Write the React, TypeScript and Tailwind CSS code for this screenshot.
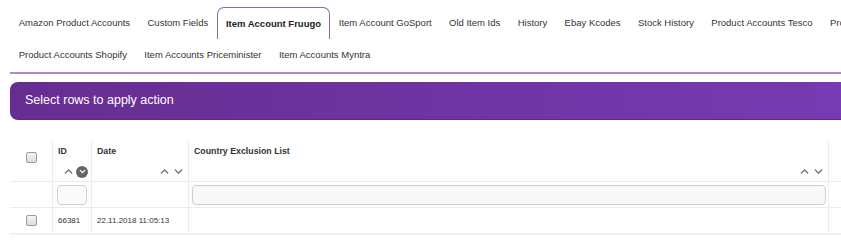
import { ChevronUp, ChevronDown } from "lucide-react"

const row1 = [
  "Amazon Product Accounts",
  "Custom Fields",
  "Item Account Fruugo",
  "Item Account GoSport",
  "Old Item Ids",
  "History",
  "Ebay Kcodes",
  "Stock History",
  "Product Accounts Tesco",
  "Product Accounts Cdiscount",
]
const row2 = ["Product Accounts Shopify", "Item Accounts Priceminister", "Item Accounts Myntra"]

function Tab({ label, active }: { label: string; active?: boolean }) {
  if (active) {
    return (
      <div className="h-[33px] px-[8px] flex items-center shrink-0 border border-b-0 border-[#8e63b8] rounded-t-[7px] bg-white font-bold text-[#222] -mb-px">
        {label}
      </div>
    )
  }
  return <div className="h-[32px] px-[8.7px] flex items-center shrink-0 text-[#333]">{label}</div>
}

function Checkbox() {
  return (
    <div className="w-[11px] h-[11px] rounded-[2px] border border-[#9a9a9a] bg-gradient-to-b from-[#f4f4f4] to-[#dcdcdc]" />
  )
}

function Sort({ activeDown }: { activeDown?: boolean }) {
  return (
    <div className="flex items-center gap-[1px] text-[#666]">
      <ChevronUp size={13} strokeWidth={2.5} />
      {activeDown ? (
        <div className="w-[12px] h-[12px] rounded-full bg-[#666] flex items-center justify-center text-white">
          <ChevronDown size={9} strokeWidth={3.5} />
        </div>
      ) : (
        <ChevronDown size={13} strokeWidth={2.5} />
      )}
    </div>
  )
}

export default function App() {
  return (
    <div className="w-[841px] h-[250px] overflow-hidden bg-white font-['Liberation_Sans',Arial,sans-serif]">
      {/* Tabs */}
      <div className="ml-[10px] pt-[7px] text-[9.5px] border-b-2 border-[#a98ad0]">
        <div className="flex items-end whitespace-nowrap overflow-hidden">
          {row1.map((t) => (
            <Tab key={t} label={t} active={t === "Item Account Fruugo"} />
          ))}
        </div>
        <div className="flex items-center whitespace-nowrap h-[33px]">
          {row2.map((t) => (
            <Tab key={t} label={t} />
          ))}
        </div>
      </div>

      {/* Action banner */}
      <div className="ml-[10px] mt-[8px] h-[38px] rounded-l-[8px] bg-gradient-to-r from-[#662d91] to-[#763bb2] border-b border-[#5b2a8c] flex items-center pl-[15px] text-white text-[12.5px]">
        Select rows to apply action
      </div>

      {/* Grid */}
      <div className="ml-[10px] mt-[22px] text-[8px] text-[#333]">
        <div className="flex h-[40px] border-b border-[#e6edf7] text-[8.8px]">
          <div className="w-[42px] flex justify-center pt-[10px]">
            <Checkbox />
          </div>
          <div className="w-[39px] border-l border-[#e6edf7] flex flex-col justify-between pl-[5px] pr-[3px] pt-[3px] pb-[3px]">
            <span className="font-bold">ID</span>
            <div className="flex justify-end">
              <Sort activeDown />
            </div>
          </div>
          <div className="w-[97px] border-l border-[#e6edf7] flex flex-col justify-between pl-[5px] pr-[3px] pt-[3px] pb-[3px]">
            <span className="font-bold">Date</span>
            <div className="flex justify-end">
              <Sort />
            </div>
          </div>
          <div className="w-[640px] border-l border-[#e6edf7] flex flex-col justify-between pl-[5px] pr-[3px] pt-[3px] pb-[3px]">
            <span className="font-bold">Country Exclusion List</span>
            <div className="flex justify-end">
              <Sort />
            </div>
          </div>
          <div className="flex-1 border-l border-[#e6edf7]" />
        </div>
        <div className="flex h-[26px] border-b border-[#e6edf7]">
          <div className="w-[42px]" />
          <div className="w-[39px] border-l border-[#e6edf7] flex items-center px-[4px]">
            <div className="w-full h-[20px] rounded-[4px] border border-[#cfcfcf] bg-[#fafafa]" />
          </div>
          <div className="w-[97px] border-l border-[#e6edf7]" />
          <div className="w-[640px] border-l border-[#e6edf7] flex items-center pl-[3px] pr-[2px]">
            <div className="w-full h-[20px] rounded-[4px] border border-[#cfcfcf] bg-[#f8f8f8]" />
          </div>
          <div className="flex-1 border-l border-[#e6edf7]" />
        </div>
        <div className="flex h-[27px] border-b-2 border-[#edf1f8]">
          <div className="w-[42px] flex justify-center items-center">
            <Checkbox />
          </div>
          <div className="w-[39px] border-l border-[#e6edf7] flex items-center pl-[5px]">66381</div>
          <div className="w-[97px] border-l border-[#e6edf7] flex items-center pl-[5px]">22.11.2018 11:05:13</div>
          <div className="w-[640px] border-l border-[#e6edf7]" />
          <div className="flex-1 border-l border-[#e6edf7]" />
        </div>
      </div>
    </div>
  )
}
